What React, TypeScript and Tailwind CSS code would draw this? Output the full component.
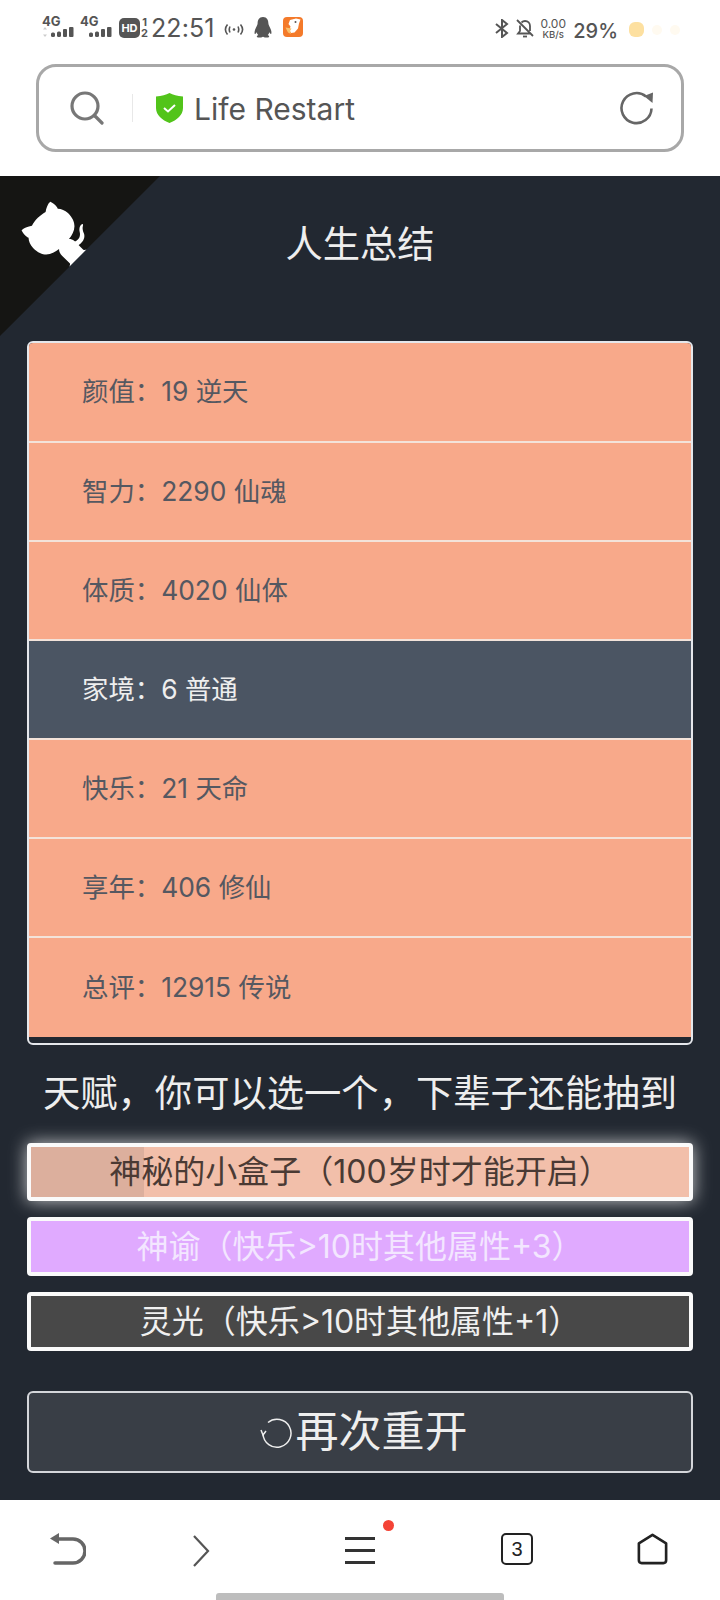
const FONT = "font-['Inter','Noto_Sans_CJK_SC',sans-serif]";

function Signal({ arrows }: { arrows?: boolean }) {
  return (
    <div className="relative w-[32px] h-[21px]">
      <span className="absolute left-0 top-[-3px] text-[13px] leading-[14px] font-bold text-[#555]">4G</span>
      <svg width="32" height="21" viewBox="0 0 32 21" className="absolute left-0 top-0">
        {arrows && <path d="M3 10l2 2.500H1zM3 20l2-2.500H1z" fill="#ccc" />}
        <rect x="9" y="15.500" width="4" height="4.500" rx="1.500" fill="#555" />
        <rect x="15" y="14.500" width="4" height="5.500" rx="1.500" fill="#555" />
        <rect x="21" y="12" width="4" height="8" rx="1" fill="#555" />
        <rect x="27" y="10" width="4.500" height="10" rx="1" fill="#555" />
      </svg>
    </div>
  );
}

function StatusBar() {
  return (
    <div className="h-[64px] flex items-start pt-[17px] pl-[42px] pr-[40px] text-[#555]">
      <Signal arrows />
      <div className="ml-[6px]"><Signal /></div>
      <div className="ml-[7px] w-[21px] h-[20px] mt-[1px] rounded-[5px] bg-[#555] text-white text-[11px] leading-[20px] font-bold text-center">HD</div>
      <div className="ml-[1px] w-[7px] flex flex-col items-center text-[11px] leading-[11px] font-bold">
        <span>1</span>
        <span>2</span>
      </div>
      <span className="ml-[3px] text-[25px] leading-[22px] tracking-[0.1px]">22:51</span>
      <svg className="ml-[9px] mt-[6px]" width="20" height="13" viewBox="0 0 20 13" fill="none" stroke="#555" strokeWidth="1.600">
        <path d="M3.500 1.500C1 4.500 1 8.500 3.500 11.500M6 3.500C5 5.500 5 7.500 6 9.500M14 3.500C15 5.500 15 7.500 14 9.500M16.500 1.500C19 4.500 19 8.500 16.500 11.500" />
        <circle cx="10" cy="6.500" r="1.300" fill="#555" stroke="none" />
      </svg>
      <svg className="ml-[10px]" width="18" height="21" viewBox="0 0 18 21" fill="#555">
        <path d="M9 0C5 0 3.600 3 3.600 6.500 3.600 8 2 10 1 13c-.7 2.300-.5 4 0 4s1-1 1.500-1.800C3 16.500 3.500 17.300 4.300 18 3 18.500 2.500 19.200 3 20c.8.800 4 .800 6-.3 2 1.100 5.200 1.100 6 .3.500-.800 0-1.500-1.300-2 .8-.7 1.300-1.500 1.800-2.800.5.800 1 1.800 1.500 1.800s.7-1.700 0-4C16 10 14.400 8 14.400 6.500 14.400 3 13 0 9 0z" />
      </svg>
      <svg className="ml-[11px]" width="20" height="20" viewBox="0 0 20 20">
        <rect width="20" height="20" rx="4" fill="#f47a2a" />
        <path d="M7 3l6-1.500 4.500 1-1.500 4-1 5-3.500 4-3.500.5-1.500-3 1-3.500-2-2.500z" fill="#fff" />
        <circle cx="12.500" cy="5" r="1" fill="#555" />
        <path d="M2.500 10.500l6 1-1.500 2.500 1 3-3-1.500z" fill="#f9c06a" />
      </svg>
      <div className="flex-1" />
      <svg className="mt-[2px]" width="14" height="19" viewBox="0 0 14 19" fill="none" stroke="#555" strokeWidth="2">
        <path d="M1 5l11 9-5 4V1l5 4-11 9" />
      </svg>
      <svg className="ml-[7px] mt-[2px]" width="18" height="19" viewBox="0 0 18 19" fill="none" stroke="#555" strokeWidth="1.800">
        <path d="M1 1l16 16M4 6.500V12l-2 2.500h12M5.500 3.500C6.500 2.500 7.500 2 9 2c3 0 5 2.200 5 5v5" />
        <path d="M7 17.500h4" />
      </svg>
      <div className="ml-[6px] w-[26px] flex flex-col items-center mt-[1px]">
        <span className="text-[12px] leading-[11px]">0.00</span>
        <span className="text-[9.500px] leading-[11px] font-medium">KB/s</span>
      </div>
      <span className="ml-[7px] text-[20px] leading-[26px] font-medium mt-[1px]">29%</span>
      <div className="ml-[11px] mt-[5px] flex gap-[8px] items-center">
        <div className="w-[15px] h-[15px] rounded-[6px] bg-[#fde0a0]" />
        <div className="w-[10px] h-[10px] rounded-full bg-[#fffaf0]" />
        <div className="w-[10px] h-[10px] rounded-full bg-[#fffaf0]" />
      </div>
    </div>
  );
}

function UrlBar() {
  return (
    <div className="h-[112px] px-[36px]">
      <div className="h-[88px] rounded-[20px] border-[3px] border-[#a8a8a8] flex items-center pl-[31px] pr-[27px]">
        <svg width="34" height="34" viewBox="0 0 34 34" fill="none" stroke="#777" strokeWidth="3.200">
          <circle cx="15" cy="15" r="13" />
          <path d="M25 25l7 7" strokeLinecap="round" />
        </svg>
        <div className="ml-[28px] w-px h-[28px] bg-[#e8e8e8]" />
        <svg className="ml-[23px]" width="27" height="30" viewBox="0 0 27 30">
          <path d="M13.500 0C17 2 21 3 27 3.500V15c0 7-6 12-13.500 15C6 27 0 22 0 15V3.500C6 3 10 2 13.500 0z" fill="#52c41a" />
          <path d="M8 15l4 3.500 7-6.500" fill="none" stroke="#fff" strokeWidth="2" />
        </svg>
        <span className="ml-[11px] mt-[2px] text-[30px] leading-[40px] text-[#555]">Life Restart</span>
        <div className="flex-1" />
        <svg width="34" height="34" viewBox="0 0 34 34" fill="none" stroke="#666" strokeWidth="2.600">
          <path d="M31.500 17.500A15 15 0 1 1 26 5.500" />
          <path d="M33 1.500L32.500 12 24 5z" fill="#666" stroke="none" />
        </svg>
      </div>
    </div>
  );
}

function Corner() {
  return (
    <svg width="160" height="160" viewBox="0 0 250 250" className="absolute left-0 top-0 -scale-x-100 text-white" fill="#151513">
      <path d="M0,0 L115,115 L130,115 L142,142 L250,250 L250,0 Z" />
      <path fill="currentColor" d="M128.3,109.0 C113.8,99.7 119.0,89.6 119.0,89.6 C122.0,82.7 120.5,78.6 120.5,78.6 C119.2,72.0 123.4,76.3 123.4,76.3 C127.3,80.9 125.5,87.3 125.5,87.3 C122.9,97.6 130.6,101.9 134.4,103.2" />
      <path fill="currentColor" d="M115.0,115.0 C114.9,115.1 118.7,116.5 119.8,115.4 L133.7,101.6 C136.9,99.2 139.9,98.4 142.2,98.6 C133.8,88.0 127.5,74.4 143.8,58.0 C148.5,53.4 154.0,51.2 159.7,51.0 C160.3,49.4 163.2,43.6 171.4,40.1 C171.4,40.1 176.1,42.5 178.8,56.2 C183.1,58.6 187.2,61.8 190.9,65.4 C194.5,69.0 197.7,73.2 200.1,77.6 C213.8,80.2 216.3,84.9 216.3,84.9 C212.7,93.1 206.9,96.0 205.4,96.6 C205.1,102.4 203.0,107.8 198.3,112.5 C181.9,128.9 168.3,122.5 157.7,114.1 C157.9,116.9 156.7,120.9 152.7,124.9 L141.0,136.5 C139.8,137.7 141.6,141.9 141.8,141.8 Z" />
    </svg>
  );
}

const rows = [
  { t: "颜值：19 逆天" },
  { t: "智力：2290 仙魂" },
  { t: "体质：4020 仙体" },
  { t: "家境：6 普通", gray: true },
  { t: "快乐：21 天命" },
  { t: "享年：406 修仙" },
  { t: "总评：12915 传说" },
];

function Summary() {
  return (
    <div className="mx-[27px] h-[704px] rounded-[6px] border-2 border-[#e5e7eb] overflow-hidden bg-[#222831]">
      {rows.map((r) => (
        <div
          key={r.t}
          className={
            (r.gray ? "bg-[#4b5563] text-[#eeeeee] " : "bg-[#f8a98a] text-[#555861] ") +
            "h-[99px] first:h-[100px] border-b-2 last:border-b-0 border-[#f3e3da] flex items-center pl-[53px] text-[26.400px]"
          }
        >
          {r.t}
        </div>
      ))}
    </div>
  );
}

function Talents() {
  return (
    <div className="mx-[27px] flex flex-col gap-[16px]">
      <div className="relative h-[58px] rounded-[4px] border-4 border-[#fafafa] bg-[#f2bfaa] shadow-[0_0_18px_rgba(255,255,255,0.75)] flex items-center justify-center text-[32px] text-[#4a3a34] overflow-hidden">
        <div className="absolute left-0 top-0 bottom-0 w-[113px] bg-[#dcaf9d]" />
        <span className="relative">神秘的小盒子（100岁时才能开启）</span>
      </div>
      <div className="h-[59px] rounded-[4px] border-4 border-[#fafafa] bg-[#e0aaff] flex items-center justify-center text-[32px] text-[#f3e6ff]">
        神谕（快乐&gt;10时其他属性+3）
      </div>
      <div className="h-[59px] rounded-[4px] border-4 border-[#fafafa] bg-[#484848] flex items-center justify-center text-[32px] text-[#f0f0f0]">
        灵光（快乐&gt;10时其他属性+1）
      </div>
    </div>
  );
}

function Restart() {
  return (
    <div className="mx-[27px] mt-[40px] h-[82px] rounded-[6px] border-2 border-[#d4d6da] bg-[#393e46] flex items-center justify-center text-[43px] text-[#eeeeee] pb-[2px] pl-[7px]">
      <svg width="32" height="32" viewBox="0 0 32 32" fill="none" stroke="#eee" strokeWidth="1.500" className="mr-[4px] mt-[4px]">
        <path d="M3 17A14 14 0 1 0 8 5.500" />
        <path d="M1 13l2 5 3-4" />
      </svg>
      再次重开
    </div>
  );
}

function Nav() {
  return (
    <div className="h-[100px] flex flex-col justify-between items-center">
      <div className="w-full flex items-start pt-[21px] pl-[50px] h-[70px]">
        <svg width="36" height="34" viewBox="0 0 36 34" fill="none" stroke="#666" strokeWidth="3.500" className="mt-[11px]">
          <path d="M9 7h14a10.500 10.500 0 0 1 0 24H5" strokeLinecap="round" />
          <path d="M0 6.500L9 1v11z" fill="#666" stroke="none" />
        </svg>
        <svg width="18" height="32" viewBox="0 0 18 32" fill="none" stroke="#555" strokeWidth="2.200" className="ml-[106px] mt-[14px]">
          <path d="M2 1l14 15L2 31" />
        </svg>
        <div className="relative ml-[135px] mt-[16px] w-[30px] h-[27px] flex flex-col justify-between">
          <div className="h-[3px] bg-[#333]" />
          <div className="h-[3px] bg-[#333]" />
          <div className="h-[3px] bg-[#333]" />
          <div className="absolute left-[38px] top-[-17px] w-[11px] h-[11px] rounded-full bg-[#f44336]" />
        </div>
        <div className="ml-[126px] mt-[12px] w-[32px] h-[32px] rounded-[5px] border-[2.500px] border-[#222] flex items-center justify-center text-[20px] font-['Liberation_Sans',sans-serif] text-[#222]">
          3
        </div>
        <svg width="31" height="34" viewBox="0 0 33 34" fill="none" stroke="#222" strokeWidth="2.800" strokeLinejoin="round" className="ml-[104px] mt-[11px]">
          <path d="M16.500 2L31 11v18c0 2-1 3-3 3H5c-2 0-3-1-3-3V11z" />
        </svg>
      </div>
      <div className="w-[288px] h-[7px] rounded-t-[3px] bg-[#bdbdbd]" />
    </div>
  );
}

export default function App() {
  return (
    <div className={`w-[720px] h-[1600px] bg-white flex flex-col ${FONT}`}>
      <StatusBar />
      <UrlBar />
      <main className="relative h-[1324px] bg-[#222831]">
        <Corner />
        <div className="pt-[45px] h-[165px] text-center text-[37.300px] leading-[48px] text-[#eeeeee]">人生总结</div>
        <Summary />
        <div className="h-[98px] flex items-center justify-center text-[37.300px] text-[#eeeeee]">天赋，你可以选一个，下辈子还能抽到</div>
        <Talents />
        <Restart />
      </main>
      <Nav />
    </div>
  );
}
